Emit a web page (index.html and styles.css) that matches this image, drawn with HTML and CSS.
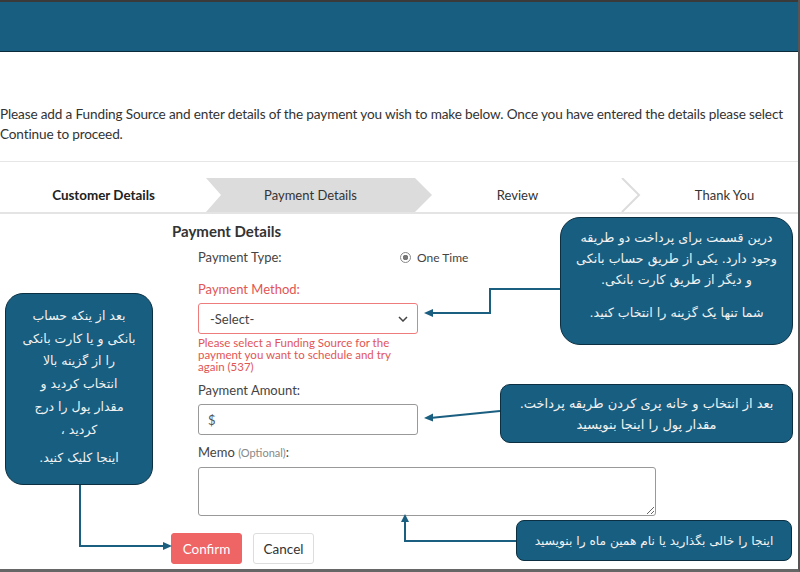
FILE: index.html
```html
<!DOCTYPE html>
<html lang="en">
<head>
<meta charset="utf-8">
<title>Payment Details</title>
<link rel="stylesheet" href="styles.css">
</head>
<body>
<div class="page">
  <header class="topbar"></header>
  <p class="intro">Please add a Funding Source and enter details of the payment you wish to make below. Once you have entered the details please select Continue to proceed.</p>
  <div class="sep"></div>
  <nav class="steps">
    <svg class="steps-bg" width="800" height="34" viewBox="0 0 800 34">
      <polygon points="206,0 415,0 432,17 415,34 206,34 221,17" fill="#dcdcdc"/>
      <polyline points="622,0 639,17 622,34" fill="none" stroke="#dcdcdc" stroke-width="2"/>
    </svg>
    <div class="step done">Customer Details</div>
    <div class="step">Payment Details</div>
    <div class="step">Review</div>
    <div class="step">Thank You</div>
  </nav>
  <section class="form">
    <h2 class="form-title">Payment Details</h2>
    <div class="fields">
      <div class="type-row">
        <span class="label">Payment Type:</span>
        <span class="radio-opt"><span class="radio"></span>One Time</span>
      </div>
      <div class="label label-err gap-l">Payment Method:</div>
      <div class="select">
        <span>-Select-</span>
        <svg width="10" height="6" viewBox="0 0 10 6"><polyline points="1,1 5,5 9,1" fill="none" stroke="#444" stroke-width="1.5"/></svg>
      </div>
      <div class="errmsg">Please select a Funding Source for the<br>payment you want to schedule and try<br>again (537)</div>
      <div class="label gap-m">Payment Amount:</div>
      <div class="input">$</div>
      <div class="label gap-m">Memo <span class="opt">(Optional)</span>:</div>
      <textarea class="memo"></textarea>
    </div>
    <div class="actions">
      <button class="btn btn-confirm">Confirm</button>
      <button class="btn btn-cancel">Cancel</button>
    </div>
  </section>

  <svg class="arrows" width="800" height="572" viewBox="0 0 800 572">
    <g fill="none" stroke="#1b5f80" stroke-width="2">
      <polyline points="560,289 490,289 490,313 430,313"/>
      <line x1="500" y1="411" x2="430" y2="418"/>
      <polyline points="516,541 405,541 405,520"/>
      <polyline points="80,485 80,546 165,546"/>
    </g>
    <g fill="#1b5f80">
      <polygon points="424,313 433,309 433,317"/>
      <polygon points="424,418 433,413.5 433,421.5"/>
      <polygon points="405,514 401,522 409,522"/>
      <polygon points="172,546 163,542 163,550"/>
    </g>
  </svg>

  <div class="callout c1" dir="rtl">
    <p>درین قسمت برای پرداخت دو طریقه<br>وجود دارد. یکی از طریق حساب بانکی<br>و دیگر از طریق کارت بانکی.</p>
    <p class="para">شما تنها یک گزینه را انتخاب کنید.</p>
  </div>
  <div class="callout c2" dir="rtl">
    <p>بعد از ینکه حساب<br>بانکی و یا کارت بانکی<br>را از گزینه بالا<br>انتخاب کردید و<br>مقدار پول را درج<br>کردید ،</p>
    <p class="para">اینجا کلیک کنید.</p>
  </div>
  <div class="callout c3" dir="rtl">
    <p>بعد از انتخاب و خانه پری کردن طریقه پرداخت.<br>مقدار پول را اینجا بنویسید</p>
  </div>
  <div class="callout c4" dir="rtl">
    <p>اینجا را خالی بگذارید یا نام همین ماه را بنویسید</p>
  </div>
</div>
</body>
</html>
```

FILE: styles.css
```css
* { box-sizing: border-box; }
html, body { margin: 0; padding: 0; background: #fff; }
body {
  font-family: Lato, "Liberation Sans", sans-serif;
  color: #333;
}
.page {
  position: relative;
  width: 800px;
  height: 572px;
  overflow: hidden;
  border-right: 2px solid #555;
  border-bottom: 3px solid #666;
  background: #fff;
}
.topbar {
  height: 52px;
  background: #175e80;
  border-top: 2px solid #3a3a3a;
  border-bottom: 1px solid #0b2a3a;
}
.intro {
  margin: 52px 0 0 0;
  font-size: 13.6px;
  letter-spacing: -0.15px;
  line-height: 20px;
  color: #333;
  padding-right: 8px;
}
.sep {
  margin-top: 17px;
  height: 1px;
  background: #e6e6e6;
}
.steps {
  position: relative;
  display: flex;
  margin-top: 16px;
  height: 36px;
  width: 828px;
  border-bottom: 2px solid #e4e4e4;
}
.steps-bg {
  position: absolute;
  left: 0;
  top: 0;
}
.step {
  position: relative;
  flex: 0 0 207px;
  display: flex;
  align-items: center;
  justify-content: center;
  font-size: 13px;
  color: #333;
}
.step.done { font-weight: 700; color: #222; font-size: 13.4px; }
.form {
  padding-left: 171px;
}
.form-title {
  margin: 7px 0 0 1px;
  font-size: 15px;
  line-height: 20px;
  font-weight: 700;
  color: #333;
}
.fields {
  padding-left: 27px;
}
.type-row {
  margin-top: 7px;
  display: flex;
  align-items: center;
  height: 18px;
}
.label {
  font-size: 13px;
  line-height: 18px;
  color: #444;
}
.type-row .label { width: 202px; }
.radio-opt {
  display: flex;
  align-items: center;
  gap: 6px;
  font-size: 12px;
  color: #444;
}
.radio {
  width: 11px;
  height: 11px;
  border-radius: 50%;
  border: 1px solid #888;
  background: radial-gradient(circle, #777 0 2.5px, #fff 3px);
}
.label-err { color: #e25555; }
.gap-l { margin-top: 14px; }
.gap-m { margin-top: 8px; }
.select, .input {
  margin-top: 5px;
  width: 220px;
  height: 31px;
  border-radius: 3px;
  display: flex;
  align-items: center;
  justify-content: space-between;
  padding: 0 9px 0 11px;
  font-size: 13px;
  color: #444;
}
.select { border: 1px solid #ee7c7c; }
.input { border: 1px solid #999; padding-left: 9px; color: #555; }
.errmsg {
  margin-top: 3px;
  font-size: 11.5px;
  line-height: 12px;
  color: #e25555;
  white-space: nowrap;
}
.opt { font-size: 11px; color: #888; }
.memo {
  display: block;
  margin-top: 5px;
  width: 458px;
  height: 49px;
  border: 1px solid #999;
  border-radius: 3px;
  resize: both;
}
.actions {
  margin-top: 17px;
  display: flex;
  gap: 11px;
}
.btn {
  height: 31px;
  border-radius: 3px;
  font-family: inherit;
  font-size: 13.5px;
  padding: 0;
}
.btn-confirm {
  width: 71px;
  background: #ef6464;
  border: 1px solid #ef6464;
  color: #fff;
}
.btn-cancel {
  width: 61px;
  background: #fff;
  border: 1px solid #ddd;
  color: #333;
}
.arrows {
  position: absolute;
  left: 0;
  top: 0;
  pointer-events: none;
}
.callout {
  position: absolute;
  background: #175e80;
  border: 1px solid #0c3042;
  color: #f2f2f2;
  font-family: "DejaVu Sans", sans-serif;
  text-align: center;
  display: flex;
  flex-direction: column;
  justify-content: center;
  align-items: center;
  white-space: nowrap;
}
.callout p { margin: 0; }
.callout .para { margin-top: 12px; }
.c1 { left: 560px; top: 217px; width: 233px; height: 128px; border-radius: 20px; line-height: 21px; font-size: 12.7px; padding-bottom: 12px; }
.c2 { left: 5px; top: 293px; width: 148px; height: 192px; border-radius: 18px; line-height: 22.8px; font-size: 12.5px; padding-bottom: 3px; }
.c2 .para { margin-top: 6px; }
.c3 { left: 500px; top: 384px; width: 293px; height: 59px; border-radius: 10px; line-height: 21px; font-size: 13px; }
.c4 { left: 516px; top: 520px; width: 276px; height: 41px; border-radius: 8px; line-height: 20px; font-size: 12.2px; }
```
